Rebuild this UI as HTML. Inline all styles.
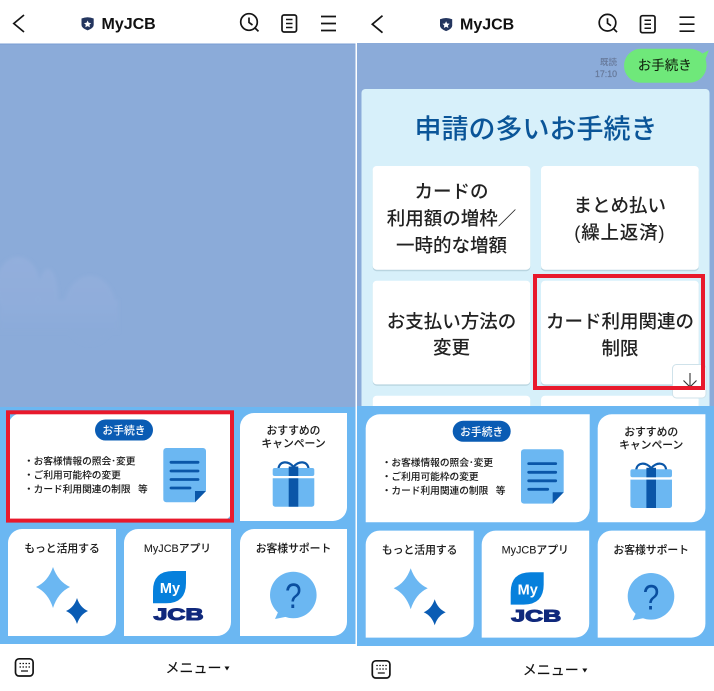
<!DOCTYPE html>
<html lang="ja">
<head>
<meta charset="utf-8">
<title>MyJCB</title>
<style>
html,body{margin:0;padding:0;background:#fff;width:714px;height:691px;overflow:hidden}
svg{display:block}
text{font-family:"Liberation Sans","Noto Sans CJK JP",sans-serif}
.lb{font-size:10.8px;font-weight:500;fill:#1c1c1c;stroke:#1c1c1c;stroke-width:.08;text-anchor:middle}
.ls{font-size:9.7px;font-weight:500;fill:#1c1c1c;stroke:#1c1c1c;stroke-width:.05}
.pl{font-size:10.8px;font-weight:500;fill:#fff;text-anchor:middle}
.hd{font-size:16px;font-weight:700;fill:#111}
.mn{font-size:14px;fill:#111;stroke:#111;stroke-width:.15;text-anchor:middle}
.bt{font-size:18.5px;font-weight:500;fill:#222;text-anchor:middle}
.ic{fill:none;stroke:#151515;stroke-width:1.7}
</style>
</head>
<body>
<svg width="714" height="691" viewBox="0 0 714 691" xmlns="http://www.w3.org/2000/svg">
<defs>
<filter id="bl" x="-30%" y="-30%" width="160%" height="160%"><feGaussianBlur stdDeviation="1.5"/></filter>
<linearGradient id="cl" gradientUnits="userSpaceOnUse" x1="0" y1="258" x2="0" y2="332"><stop offset="0" stop-color="#93afdc"/><stop offset=".6" stop-color="#90addb"/><stop offset="1" stop-color="#8babd9"/></linearGradient>
<clipPath id="cc"><rect x="0" y="44" width="356" height="363"/></clipPath>
<clipPath id="cd"><rect x="361" y="89" width="349" height="317"/></clipPath>
</defs>
<rect width="714" height="691" fill="#fff"/>

<!-- LEFT background -->
<rect x="0" y="43.500" width="355.500" height="364" fill="#8babd9"/>
<rect x="0" y="43.500" width="355.500" height="1" fill="#7a9dd3"/>
<g clip-path="url(#cc)" fill="url(#cl)" filter="url(#bl)">
<ellipse cx="18" cy="287" rx="22" ry="30"/>
<ellipse cx="48" cy="297" rx="10" ry="28"/>
<ellipse cx="90" cy="310" rx="26" ry="34"/>
<rect x="0" y="300" width="118" height="32"/>
</g>

<!-- RIGHT background -->
<rect x="357" y="43" width="357" height="364" fill="#8babd9"/>

<!-- LEFT header -->
<g>
<path class="ic" d="M24 15 L13.800 23.500 L24 32"/>
<path d="M81.500 18.500 Q87.500 16 93.700 18.500 V25 Q93.700 28 87.600 30.400 Q81.500 28 81.500 25Z" fill="#24365f"/>
<path d="M87.600 20.500 l1.100 2.300 2.500.3 -1.800 1.700 .5 2.500 -2.300-1.200 -2.300 1.200 .5-2.500 -1.800-1.700 2.500-.3Z" fill="#fff"/>
<text class="hd" x="101.500" y="29">MyJCB</text>
<circle class="ic" cx="249" cy="22" r="8.300"/>
<path class="ic" d="M255 28 L258.500 31.400"/>
<path class="ic" d="M249 17.500 V22.500 L252.500 25"/>
<rect class="ic" x="282" y="15" width="14.500" height="17" rx="2"/>
<path class="ic" style="stroke-width:1.500" d="M286 19.500 H292.500 M286 23.500 H292.500 M286 27.500 H292.500"/>
<path class="ic" d="M321 16.500 H336 M321 23.500 H336 M321 30.500 H336"/>
</g>

<!-- RIGHT header -->
<g transform="translate(358.500,0.700)">
<path class="ic" d="M24 15 L13.800 23.500 L24 32"/>
<path d="M81.500 18.500 Q87.500 16 93.700 18.500 V25 Q93.700 28 87.600 30.400 Q81.500 28 81.500 25Z" fill="#24365f"/>
<path d="M87.600 20.500 l1.100 2.300 2.500.3 -1.800 1.700 .5 2.500 -2.300-1.200 -2.300 1.200 .5-2.500 -1.800-1.700 2.500-.3Z" fill="#fff"/>
<text class="hd" x="101.500" y="29">MyJCB</text>
<circle class="ic" cx="249" cy="22" r="8.300"/>
<path class="ic" d="M255 28 L258.500 31.400"/>
<path class="ic" d="M249 17.500 V22.500 L252.500 25"/>
<rect class="ic" x="282" y="15" width="14.500" height="17" rx="2"/>
<path class="ic" style="stroke-width:1.500" d="M286 19.500 H292.500 M286 23.500 H292.500 M286 27.500 H292.500"/>
<path class="ic" d="M321 16.500 H336 M321 23.500 H336 M321 30.500 H336"/>
</g>

<!-- RIGHT chat -->
<text x="617" y="65" font-size="8.500" font-weight="500" fill="#667899" text-anchor="end">既読</text>
<text x="617" y="77" font-size="8.800" font-weight="500" fill="#667899" stroke="#667899" stroke-width=".2" text-anchor="end">17:10</text>
<path d="M641 48.700 H689 Q697 48.700 702.500 53.500 L708.800 50.300 L705.500 59 Q706.500 62 706.500 65.700 A17 17 0 0 1 689.500 82.700 H641 A17 17 0 0 1 641 48.700Z" fill="#6fe87a"/>
<text x="664.800" y="70" font-size="13.500" fill="#12240f" stroke="#12240f" stroke-width=".1" text-anchor="middle">お手続き</text>

<!-- RIGHT card -->
<rect x="361.500" y="89" width="348" height="330" rx="4" fill="#d7f0fa"/>
<text x="536" y="138.500" font-size="27" font-weight="500" fill="#0a5598" text-anchor="middle">申請の多いお手続き</text>
<g clip-path="url(#cd)">
<g fill="#b9d5e0">
<rect x="372.700" y="167.500" width="157.600" height="103.700" rx="4"/>
<rect x="541" y="167.500" width="157.700" height="103.700" rx="4"/>
<rect x="372.700" y="282" width="157.600" height="103.700" rx="4"/>
<rect x="541" y="282" width="157.700" height="103.700" rx="4"/>
<rect x="372.700" y="397" width="157.600" height="60" rx="4"/>
<rect x="541" y="397" width="157.700" height="60" rx="4"/>
</g>
<g fill="#fff">
<rect x="372.700" y="166" width="157.600" height="103.700" rx="4"/>
<rect x="541" y="166" width="157.700" height="103.700" rx="4"/>
<rect x="372.700" y="280.700" width="157.600" height="103.700" rx="4"/>
<rect x="541" y="280.700" width="157.700" height="103.700" rx="4"/>
<rect x="372.700" y="395.700" width="157.600" height="60" rx="4"/>
<rect x="541" y="395.700" width="157.700" height="60" rx="4"/>
</g>
</g>
<text class="bt" x="451.500" y="198">カードの</text>
<text class="bt" x="451.500" y="225">利用額の増枠／</text>
<text class="bt" x="451.500" y="252">一時的な増額</text>
<text class="bt" x="619.800" y="212">まとめ払い</text>
<text class="bt" x="619.800" y="239" letter-spacing=".8">(繰上返済)</text>
<text class="bt" x="451.500" y="328">お支払い方法の</text>
<text class="bt" x="451.500" y="354">変更</text>
<text class="bt" x="620" y="328">カード利用関連の</text>
<text class="bt" x="620" y="355">制限</text>
<rect x="672.500" y="364.500" width="33.500" height="33.500" rx="4" fill="#fff" stroke="#cfe2ea" stroke-width="1"/>
<path d="M690 373 V387 M683.500 380.500 L690 387 L696.500 380.500" fill="none" stroke="#333" stroke-width="1.100"/>
<rect x="535" y="276" width="168" height="112" fill="none" stroke="#e8192c" stroke-width="4"/>

<!-- LEFT rich menu -->
<rect x="0" y="407" width="355.500" height="237" fill="#6bb7f2"/>
<g>
<path d="M22 413 H233 V507 A14 14 0 0 1 219 521.500 H8 V427 A14 14 0 0 1 22 413Z" fill="#fff"/>
<rect x="95" y="419.500" width="58" height="21" rx="10.500" fill="#0a5cb4"/>
<text class="pl" x="124" y="434">お手続き</text>
<text class="ls" x="24" y="464.500">・お客様情報の照会･変更</text>
<text class="ls" x="24" y="478.500">・ご利用可能枠の変更</text>
<text class="ls" x="24" y="492.500">・カード利用関連の制限</text>
<text class="ls" x="138" y="492.500">等</text>
<path d="M166.300 448 H203 a3 3 0 0 1 3 3 V491 L195 502.300 H166.300 a3 3 0 0 1 -3 -3 V451 a3 3 0 0 1 3 -3Z" fill="#6bb7f2"/>
<path d="M195 491 H206 L195 502.300Z" fill="#0a56a8"/>
<path d="M171 462.300 H198 M171 471 H198 M171 479.500 H198 M171 488 H190" stroke="#0a56a8" stroke-width="2.800" stroke-linecap="round" fill="none"/>

<path d="M254 413 H347 V507 A14 14 0 0 1 333 521 H240 V427 A14 14 0 0 1 254 413Z" fill="#fff"/>
<text class="lb" x="293.500" y="434">おすすめの</text>
<text class="lb" x="293.500" y="447">キャンペーン</text>
<path d="M278.500 469 C279 460.500 289 460.500 293.500 467 C298 460.500 308 460.500 308.500 469" fill="none" stroke="#0a56a8" stroke-width="2.200"/>
<rect x="272.700" y="468" width="41.600" height="8" rx="2" fill="#6bb7f2"/>
<path d="M272.700 478.300 H314.300 V504.200 a2.500 2.500 0 0 1 -2.500 2.500 H275.200 a2.500 2.500 0 0 1 -2.500 -2.500Z" fill="#6bb7f2"/>
<rect x="288.700" y="466.500" width="9.600" height="9.500" fill="#0a56a8"/>
<rect x="288.700" y="478.300" width="9.600" height="28.400" fill="#0a56a8"/>

<path d="M22 529 H116 V622 A14 14 0 0 1 102 636 H8 V543 A14 14 0 0 1 22 529Z" fill="#fff"/>
<text class="lb" x="62" y="552">もっと活用する</text>
<path d="M53 567 Q58 581.500 70 587 Q58 592.500 53 608 Q48 592.500 36 587 Q48 581.500 53 567Z" fill="#6bb7f2"/>
<path d="M77 598 Q80 607.500 88 611 Q80 614.500 77 624 Q74 614.500 66 611 Q74 607.500 77 598Z" fill="#0a5cb4"/>

<path d="M138 529 H231 V622 A14 14 0 0 1 217 636 H124 V543 A14 14 0 0 1 138 529Z" fill="#fff"/>
<text class="lb" x="177.500" y="552">MyJCBアプリ</text>
<path d="M186 571 V583 Q186 603.300 166 603.300 H153 V591 Q153 571 173 571Z" fill="#0680dc"/>
<text x="170" y="593" font-size="14.500" font-weight="700" fill="#fff" text-anchor="middle">My</text>
<text x="153.500" y="620.200" font-size="17" font-weight="700" fill="#10297c" stroke="#10297c" stroke-width="1.100" textLength="50" lengthAdjust="spacingAndGlyphs">JCB</text>

<path d="M254 529 H347 V622 A14 14 0 0 1 333 636 H240 V543 A14 14 0 0 1 254 529Z" fill="#fff"/>
<text class="lb" x="293.500" y="552">お客様サポート</text>
<circle cx="293.300" cy="595" r="23.300" fill="#6bb7f2"/>
<path d="M279 610 L275 619 L290 616Z" fill="#6bb7f2"/>
<text transform="translate(293.300,608) scale(.85,1)" font-size="35" fill="#0a4ea0" text-anchor="middle">?</text>
</g>
<rect x="8" y="412.300" width="224" height="108.300" fill="none" stroke="#e8192c" stroke-width="4"/>

<!-- RIGHT rich menu -->
<rect x="357" y="406" width="357" height="240" fill="#6bb7f2"/>
<g transform="translate(357.700,1.300)">
<path d="M22 413 H232 V507 A14 14 0 0 1 218 521 H8 V427 A14 14 0 0 1 22 413Z" fill="#fff"/>
<rect x="95" y="419.500" width="58" height="21" rx="10.500" fill="#0a5cb4"/>
<text class="pl" x="124" y="434">お手続き</text>
<text class="ls" x="24" y="464.500">・お客様情報の照会･変更</text>
<text class="ls" x="24" y="478.500">・ご利用可能枠の変更</text>
<text class="ls" x="24" y="492.500">・カード利用関連の制限</text>
<text class="ls" x="138" y="492.500">等</text>
<path d="M166.300 448 H203 a3 3 0 0 1 3 3 V491 L195 502.300 H166.300 a3 3 0 0 1 -3 -3 V451 a3 3 0 0 1 3 -3Z" fill="#6bb7f2"/>
<path d="M195 491 H206 L195 502.300Z" fill="#0a56a8"/>
<path d="M171 462.300 H198 M171 471 H198 M171 479.500 H198 M171 488 H190" stroke="#0a56a8" stroke-width="2.800" stroke-linecap="round" fill="none"/>

<path d="M254 413 H347.700 V507 A14 14 0 0 1 333.700 521 H240 V427 A14 14 0 0 1 254 413Z" fill="#fff"/>
<text class="lb" x="293.500" y="434">おすすめの</text>
<text class="lb" x="293.500" y="447">キャンペーン</text>
<path d="M278.500 469 C279 460.500 289 460.500 293.500 467 C298 460.500 308 460.500 308.500 469" fill="none" stroke="#0a56a8" stroke-width="2.200"/>
<rect x="272.700" y="468" width="41.600" height="8" rx="2" fill="#6bb7f2"/>
<path d="M272.700 478.300 H314.300 V504.200 a2.500 2.500 0 0 1 -2.500 2.500 H275.200 a2.500 2.500 0 0 1 -2.500 -2.500Z" fill="#6bb7f2"/>
<rect x="288.700" y="466.500" width="9.600" height="9.500" fill="#0a56a8"/>
<rect x="288.700" y="478.300" width="9.600" height="28.400" fill="#0a56a8"/>

<path d="M22 529.300 H116 V622.300 A14 14 0 0 1 102 636.300 H8 V543.300 A14 14 0 0 1 22 529.300Z" fill="#fff"/>
<text class="lb" x="62" y="552">もっと活用する</text>
<path d="M53 567 Q58 581.500 70 587 Q58 592.500 53 608 Q48 592.500 36 587 Q48 581.500 53 567Z" fill="#6bb7f2"/>
<path d="M77 598 Q80 607.500 88 611 Q80 614.500 77 624 Q74 614.500 66 611 Q74 607.500 77 598Z" fill="#0a5cb4"/>

<path d="M138 529.300 H231.500 V622.300 A14 14 0 0 1 217.500 636.300 H124 V543.300 A14 14 0 0 1 138 529.300Z" fill="#fff"/>
<text class="lb" x="177.500" y="552">MyJCBアプリ</text>
<path d="M186 571 V583 Q186 603.300 166 603.300 H153 V591 Q153 571 173 571Z" fill="#0680dc"/>
<text x="170" y="593" font-size="14.500" font-weight="700" fill="#fff" text-anchor="middle">My</text>
<text x="153.500" y="620.200" font-size="17" font-weight="700" fill="#10297c" stroke="#10297c" stroke-width="1.100" textLength="50" lengthAdjust="spacingAndGlyphs">JCB</text>

<path d="M254 529.300 H347.700 V622.300 A14 14 0 0 1 333.700 636.300 H240 V543.300 A14 14 0 0 1 254 529.300Z" fill="#fff"/>
<text class="lb" x="293.500" y="552">お客様サポート</text>
<circle cx="293.300" cy="595" r="23.300" fill="#6bb7f2"/>
<path d="M279 610 L275 619 L290 616Z" fill="#6bb7f2"/>
<text transform="translate(293.300,608) scale(.85,1)" font-size="35" fill="#0a4ea0" text-anchor="middle">?</text>
</g>

<!-- LEFT footer -->
<g>
<rect x="15.500" y="658.800" width="17.600" height="17.200" rx="3.500" fill="none" stroke="#151515" stroke-width="1.700"/>
<path d="M19.500 663.500 h1.500 m1.500 0 h1.500 m1.500 0 h1.500 m1.500 0 h1.500 M19.500 667 h1.500 m1.500 0 h1.500 m1.500 0 h1.500 m1.500 0 h1.500 M21 671 h7" stroke="#151515" stroke-width="1.300" fill="none"/>
<text class="mn" x="193.500" y="673">メニュー</text>
<path d="M224.500 666.500 H229.500 L227 670.500Z" fill="#111"/>
</g>
<!-- RIGHT footer -->
<g transform="translate(356.800,2)">
<rect x="15.500" y="658.800" width="17.600" height="17.200" rx="3.500" fill="none" stroke="#151515" stroke-width="1.700"/>
<path d="M19.500 663.500 h1.500 m1.500 0 h1.500 m1.500 0 h1.500 m1.500 0 h1.500 M19.500 667 h1.500 m1.500 0 h1.500 m1.500 0 h1.500 m1.500 0 h1.500 M21 671 h7" stroke="#151515" stroke-width="1.300" fill="none"/>
<text class="mn" x="194" y="673">メニュー</text>
<path d="M225.500 666.500 H230.500 L228 670.500Z" fill="#111"/>
</g>
</svg>
</body>
</html>
